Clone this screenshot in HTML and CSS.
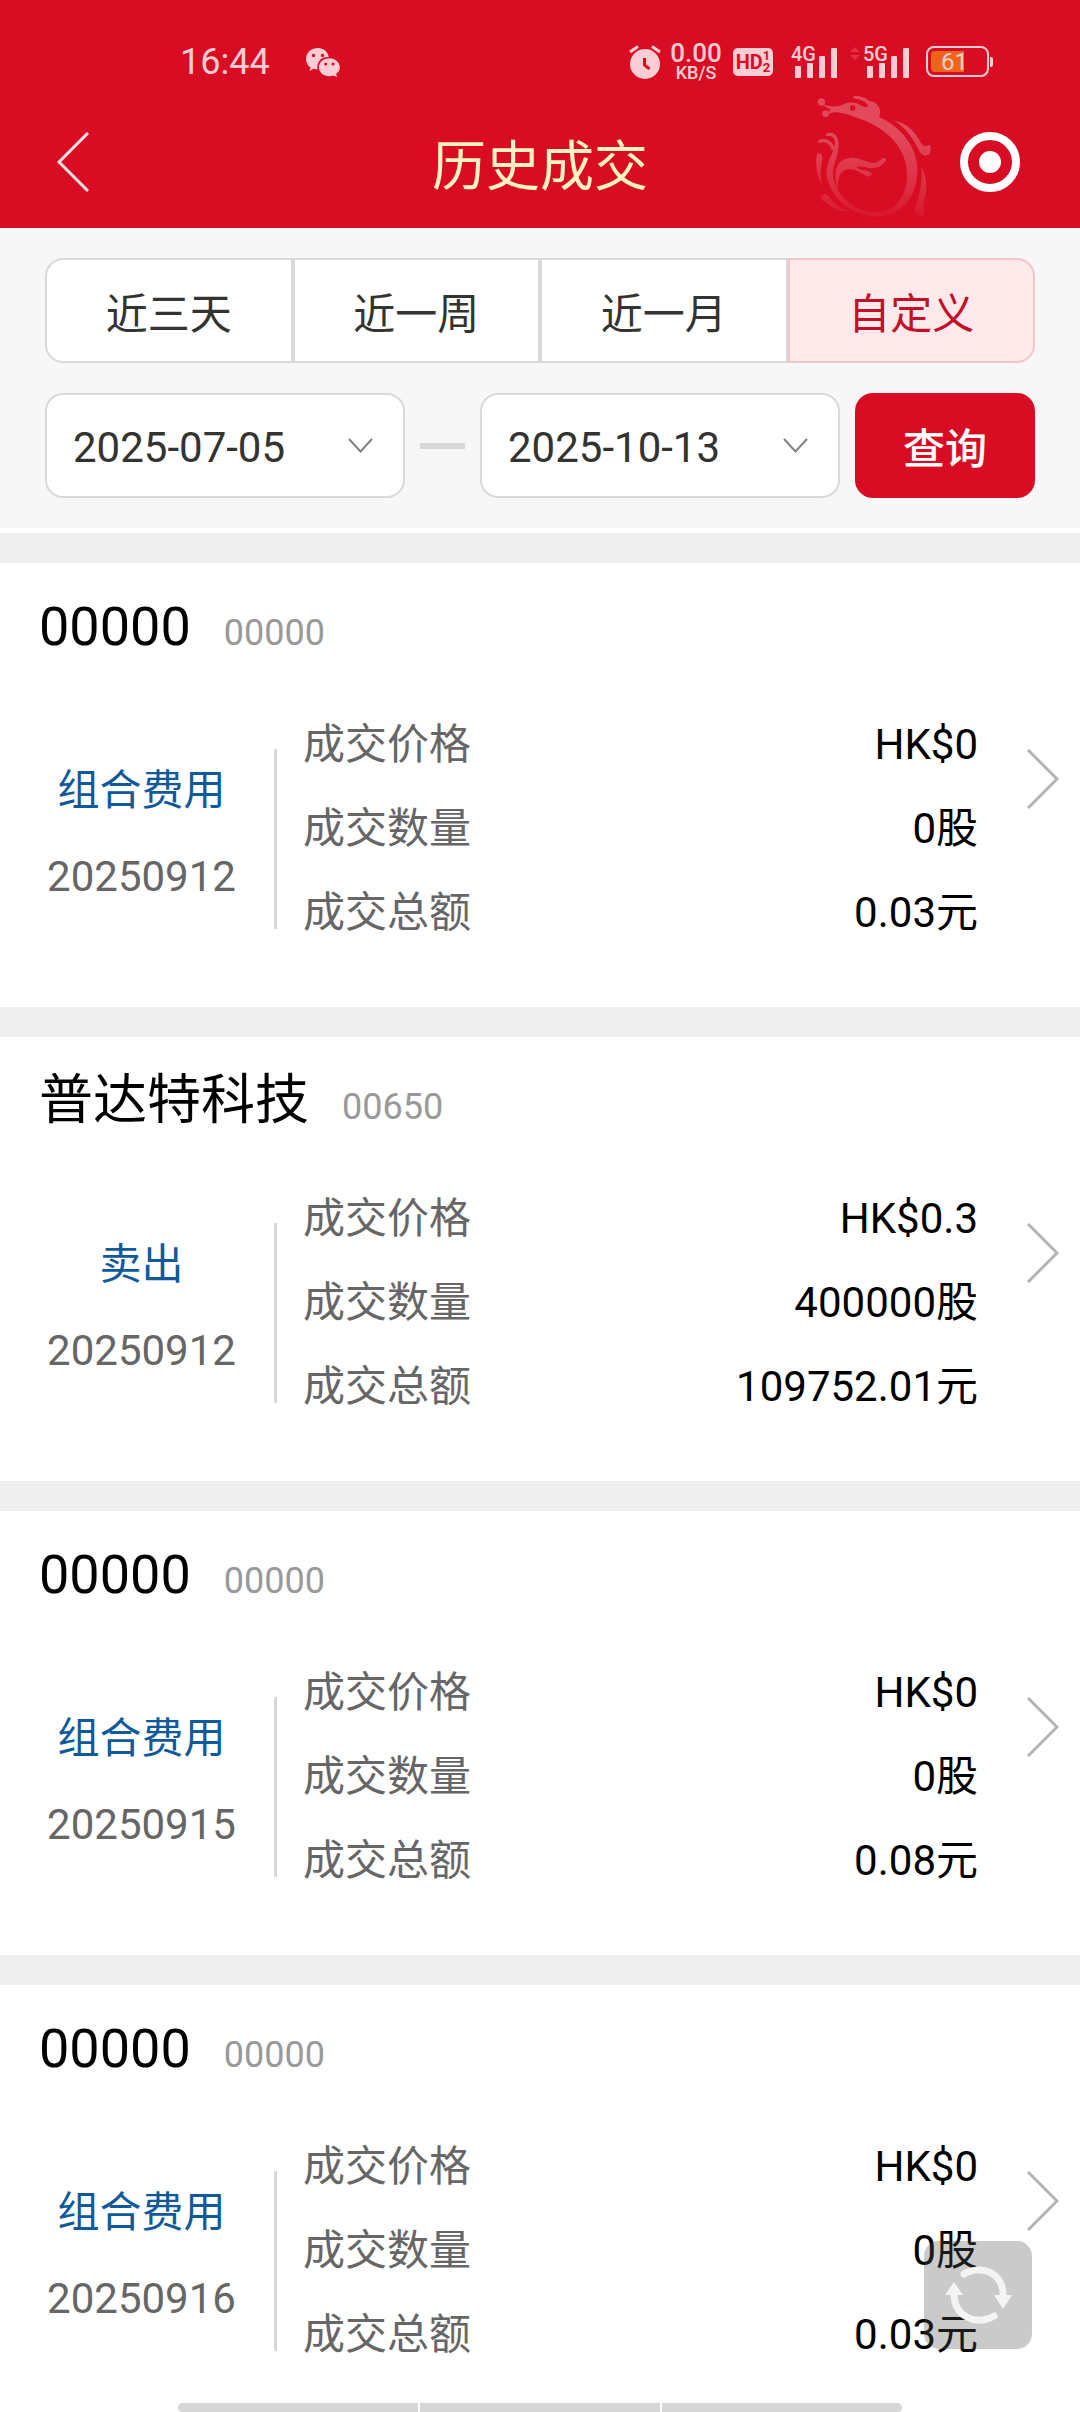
FILE: index.html
```html
<!DOCTYPE html>
<html lang="zh-CN">
<head>
<meta charset="utf-8">
<meta name="viewport" content="width=device-width, initial-scale=1">
<title>历史成交</title>
<link rel="stylesheet" href="styles.css">
</head>
<body>
<div class="screen">
  <header class="top">
    <div class="status">
      <span class="clock">16:44</span>
      <svg viewBox="0 0 34 30" width="34" height="30" fill="currentColor" aria-hidden="true">
        <path fill-rule="evenodd" d="M12 1C5.400 1 0 5.600 0 12c0 3.600 1.800 6.600 4.600 8.600L3.500 24l4.300-2.200c1.300.4 2.400.6 3.800.6A10 10 0 0 1 22.800 10C21.900 4.800 17.500 1 12 1ZM7.500 6.800a1.700 1.700 0 1 1 0 3.400 1.700 1.700 0 0 1 0-3.400Zm9 0a1.700 1.700 0 1 1 0 3.400 1.700 1.700 0 0 1 0-3.400Z"/>
        <path fill-rule="evenodd" d="M23.300 11.200c-5.800 0-10.400 4-10.400 9s4.600 9 10.400 9c1.400 0 2.600-.2 3.800-.6L31 30l-.9-3.200c2.400-1.600 3.700-4 3.700-6.600 0-5-4.700-9-10.500-9ZM19.700 15.600a1.500 1.500 0 1 1 0 3 1.500 1.500 0 0 1 0-3Zm7.300 0a1.500 1.500 0 1 1 0 3 1.500 1.500 0 0 1 0-3Z"/>
      </svg>
      <div class="status-right">
        <svg viewBox="0 0 32 34" width="32" height="34" fill="none" aria-hidden="true">
          <path d="M1 7 9 1.500M31 7 23 1.500" stroke="currentColor" stroke-width="3"/>
          <circle cx="16" cy="19" r="15" fill="currentColor"/>
          <path d="M15.500 13v7l5 4" stroke="#d80c22" stroke-width="3"/>
        </svg>
        <span class="speed"><span>0.00</span><span class="speed-unit">KB/S</span></span>
        <span class="hd"><span>HD</span><span class="hd-sims"><span>1</span><span>2</span></span></span>
        <span class="signal">
          <span class="signal-type">4G</span>
          <svg viewBox="0 0 47 32" width="47" height="32" fill="currentColor" aria-hidden="true"><rect x="4" y="20" width="6" height="12" rx="1"/><rect x="16" y="17" width="6" height="15" rx="1"/><rect x="28" y="10" width="6" height="22" rx="1"/><rect x="40" y="2" width="6" height="30" rx="1"/></svg>
        </span>
        <svg class="traffic" viewBox="0 0 10 32" width="10" height="32" fill="currentColor" aria-hidden="true"><path d="M0 6 5 1l5 5zM0 9l5 5 5-5z"/></svg>
        <span class="signal">
          <span class="signal-type">5G</span>
          <svg viewBox="0 0 47 32" width="47" height="32" fill="currentColor" aria-hidden="true"><rect x="4" y="20" width="6" height="12" rx="1"/><rect x="16" y="17" width="6" height="15" rx="1"/><rect x="28" y="10" width="6" height="22" rx="1"/><rect x="40" y="2" width="6" height="30" rx="1"/></svg>
        </span>
        <span class="battery">
          <svg viewBox="0 0 67 32" width="67" height="32" aria-hidden="true"><rect x="1" y="1" width="61" height="29" rx="7" fill="none" stroke="currentColor" stroke-width="2"/><path d="M64 11h1a2 2 0 0 1 2 2v6a2 2 0 0 1-2 2h-1z" fill="currentColor"/><path d="M9 5h29v21H9a4 4 0 0 1-4-4V9a4 4 0 0 1 4-4z" fill="#ec651b"/></svg>
          <span class="battery-level">61</span>
        </span>
      </div>
    </div>
    <div class="titlebar">
      <button class="icon-button" type="button" aria-label="返回">
        <svg viewBox="0 0 32 60" width="32" height="60" fill="none" stroke="#ffe4e6" stroke-width="3"><path d="M31 1 2 30 31 59"/></svg>
      </button>
      <h1>历史成交</h1>
      <div class="titlebar-end">
        <svg viewBox="0 18 420 396" width="140" height="132" aria-hidden="true">
          <defs>
            <linearGradient id="fade" x1="0" y1="0" x2="0" y2="1"><stop offset="0" stop-color="#fff" stop-opacity=".26"/><stop offset=".3" stop-color="#fff" stop-opacity=".25"/><stop offset=".7" stop-color="#fff" stop-opacity=".14"/><stop offset="1" stop-color="#fff" stop-opacity=".01"/></linearGradient>
            <mask id="dragon">
              <g fill="#fff">
                <circle cx="49" cy="36" r="11"/>
                <circle cx="62" cy="71" r="10"/>
                <path d="M52 44C66 54 70 54 76 59C78 61 70 64 66 72C74 72 78 68 86 67C105 64 140 76 180 92C255 123 306 180 306 255C306 320 270 366 215 366C150 366 95 320 84 260C80 225 102 200 100 165L88 165C88 190 64 210 64 250C70 310 130 380 215 380C290 380 337 320 337 240C337 160 275 105 224 82C220 78 227 76 225 64C224 46 208 32 193 34C185 24 168 18 150 18C142 18 144 26 150 26C166 27 182 34 189 45C190 54 176 52 165 45C150 36 132 36 118 42C100 52 75 52 52 42Z"/>
                <path d="M36 191c8-5 18 3 16 18C44 240 46 270 54 290C34 260 32 225 34 205Z"/>
                <path d="M98 300C84 250 92 212 130 205C160 198 185 220 205 219C222 218 228 205 235 204C244 202 244 210 240 216C230 231 210 236 190 234C170 229 155 226 156 233C170 242 195 240 200 250C202 258 192 262 184 258C165 248 150 236 130 237C105 240 98 262 98 300Z"/>
                <path d="M268 93C300 96 325 120 340 145C350 165 358 172 366 167C374 162 378 168 377 180C376 197 360 203 348 190C330 165 320 125 268 93Z"/>
                <path d="M350 232C370 270 366 310 356 340C352 352 362 362 358 372C350 385 330 378 330 360C335 330 352 310 350 232Z"/>
                <path d="M50 318c10-12 22 0 28 10C90 345 105 355 135 364C105 368 80 356 66 338C58 336 44 330 50 318Z"/>
                <path d="M150 392Q200 402 245 388Q205 410 150 392Z"/>
              </g>
              <path d="M44 154C62 148 78 156 84 176M68 134C90 128 100 150 94 180" fill="none" stroke="#fff" stroke-width="10" stroke-linecap="round"/>
              <circle cx="143" cy="54" r="8" fill="#000"/>
            </mask>
          </defs>
          <rect y="18" width="420" height="396" fill="url(#fade)" mask="url(#dragon)"/>
        </svg>
        <button class="icon-button" type="button" aria-label="关闭">
          <svg viewBox="0 0 60 60" width="60" height="60"><circle cx="30" cy="30" r="26" fill="none" stroke="#fff" stroke-width="8"/><circle cx="30" cy="30" r="11" fill="#fff"/></svg>
        </button>
      </div>
    </div>
  </header>

  <form class="filter">
    <div class="ranges">
      <button type="button">近三天</button>
      <button type="button">近一周</button>
      <button type="button">近一月</button>
      <button type="button" class="selected" aria-pressed="true">自定义</button>
    </div>
    <div class="dates">
      <div class="date">
        <select aria-label="开始日期"><option>2025-07-05</option></select>
        <svg viewBox="0 0 25 15" width="25" height="15" fill="none" stroke="#808080" stroke-width="2" aria-hidden="true"><path d="M1 1 12.500 13.500 24 1"/></svg>
      </div>
      <span class="dash"></span>
      <div class="date">
        <select aria-label="结束日期"><option>2025-10-13</option></select>
        <svg viewBox="0 0 25 15" width="25" height="15" fill="none" stroke="#808080" stroke-width="2" aria-hidden="true"><path d="M1 1 12.500 13.500 24 1"/></svg>
      </div>
      <button class="query" type="submit">查询</button>
    </div>
  </form>

  <main>
    <a class="record" href="#">
      <h2>00000 <small>00000</small></h2>
      <div class="record-body">
        <div class="kind"><span class="action">组合费用</span><time datetime="2025-09-12">20250912</time></div>
        <dl>
          <div><dt>成交价格</dt><dd>HK$0</dd></div>
          <div><dt>成交数量</dt><dd>0股</dd></div>
          <div><dt>成交总额</dt><dd>0.03元</dd></div>
        </dl>
        <svg class="more" viewBox="0 0 32 60" width="32" height="60" aria-hidden="true"><path d="M1 1 30 30 1 59"/></svg>
      </div>
    </a>
    <a class="record" href="#">
      <h2>普达特科技 <small>00650</small></h2>
      <div class="record-body">
        <div class="kind"><span class="action">卖出</span><time datetime="2025-09-12">20250912</time></div>
        <dl>
          <div><dt>成交价格</dt><dd>HK$0.3</dd></div>
          <div><dt>成交数量</dt><dd>400000股</dd></div>
          <div><dt>成交总额</dt><dd>109752.01元</dd></div>
        </dl>
        <svg class="more" viewBox="0 0 32 60" width="32" height="60" aria-hidden="true"><path d="M1 1 30 30 1 59"/></svg>
      </div>
    </a>
    <a class="record" href="#">
      <h2>00000 <small>00000</small></h2>
      <div class="record-body">
        <div class="kind"><span class="action">组合费用</span><time datetime="2025-09-15">20250915</time></div>
        <dl>
          <div><dt>成交价格</dt><dd>HK$0</dd></div>
          <div><dt>成交数量</dt><dd>0股</dd></div>
          <div><dt>成交总额</dt><dd>0.08元</dd></div>
        </dl>
        <svg class="more" viewBox="0 0 32 60" width="32" height="60" aria-hidden="true"><path d="M1 1 30 30 1 59"/></svg>
      </div>
    </a>
    <a class="record" href="#">
      <h2>00000 <small>00000</small></h2>
      <div class="record-body">
        <div class="kind"><span class="action">组合费用</span><time datetime="2025-09-16">20250916</time></div>
        <dl>
          <div><dt>成交价格</dt><dd>HK$0</dd></div>
          <div><dt>成交数量</dt><dd>0股</dd></div>
          <div><dt>成交总额</dt><dd>0.03元</dd></div>
        </dl>
        <svg class="more" viewBox="0 0 32 60" width="32" height="60" aria-hidden="true"><path d="M1 1 30 30 1 59"/></svg>
      </div>
    </a>
  </main>
</div>

<button class="refresh" type="button" aria-label="刷新">
  <svg viewBox="0 0 108 108" width="108" height="108" fill="none" stroke="#f4f4f4" stroke-width="7" stroke-linecap="round" aria-hidden="true">
    <path d="M40 33C58 23 80 32 79 56"/>
    <path d="M70 75C52 85 30 76 30 52"/>
    <path d="M70 54h18l-9 14zM21 54h18l-9-13z" fill="#f4f4f4" stroke="none"/>
  </svg>
</button>
<div class="nav-hint" aria-hidden="true"><span></span><span></span><span></span></div>
</body>
</html>
```
FILE: styles.css
```css
* {
  box-sizing: border-box;
}

body {
  margin: 0;
  background: #fff;
  color: #000;
  font-family: Roboto, "Noto Sans CJK SC", sans-serif;
  font-size: 42px;
}

svg {
  display: block;
  flex: none;
}

button,
select {
  margin: 0;
  padding: 0;
  border: 0;
  background: none;
  color: inherit;
  font: inherit;
}

.screen {
  height: 100vh;
  overflow: hidden;
}

/* Header */

.top {
  background: #d80c22;
  color: #fccdd5;
}

.status {
  display: flex;
  align-items: center;
  height: 96px;
  padding: 28px 87px 0 180px;
}

.clock {
  margin-right: 36px;
  font-size: 36px;
}

.status-right {
  display: flex;
  align-items: center;
  margin-left: auto;
  font-weight: 500;
}

.speed {
  display: flex;
  flex-direction: column;
  align-items: center;
  width: 52px;
  margin: 0 11px 0 9px;
  font-size: 26px;
  line-height: 22px;
}

.speed-unit {
  font-size: 18px;
  line-height: 18px;
}

.hd {
  display: flex;
  align-items: center;
  justify-content: center;
  width: 40px;
  height: 28px;
  margin-right: 18px;
  border-radius: 5px;
  background: #fccdd5;
  color: #d80c22;
  font-size: 20px;
  font-weight: 700;
}

.hd-sims {
  display: flex;
  flex-direction: column;
  font-size: 13px;
  line-height: 12px;
}

.signal,
.battery {
  position: relative;
}

.signal-type {
  position: absolute;
  top: -2px;
  left: 0;
  font-size: 20px;
  line-height: 20px;
}

.traffic {
  margin: 0 3px 0 12px;
  opacity: .2;
}

.battery {
  margin-left: 16px;
}

.battery-level {
  position: absolute;
  inset: 0 25px 0 0;
  font-size: 24px;
  font-weight: 400;
  line-height: 32px;
  text-align: right;
}

.titlebar {
  display: grid;
  grid-template-columns: 1fr auto 1fr;
  align-items: center;
  padding: 0 60px;
}

.titlebar h1 {
  margin: 0;
  color: #fff2c4;
  font-size: 54px;
  font-weight: 400;
}

.titlebar-end {
  display: flex;
  align-items: center;
  justify-content: flex-end;
  gap: 15px;
}

.icon-button {
  justify-self: start;
}

.titlebar > .icon-button {
  margin-left: -3px;
}

/* Filter */

.filter {
  display: grid;
  gap: 30px;
  padding: 30px 45px;
  border-bottom: 5px solid #fff;
  background: #f7f7f7;
  color: #333330;
}

.ranges {
  display: grid;
  grid-template-columns: repeat(4, 1fr);
}

.ranges button {
  height: 105px;
  border: 2px solid #d9d9d9;
  background: #fff;
}

.ranges button:first-child {
  border-radius: 18px 0 0 18px;
}

.ranges button:last-child {
  border-radius: 0 18px 18px 0;
}

.ranges .selected {
  border-color: #f3c6ca;
  background: #ffe9ea;
  color: #c40f28;
}

.dates {
  display: flex;
  align-items: center;
  gap: 15px;
}

.date {
  display: flex;
  flex: 1;
  align-items: center;
  height: 105px;
  padding: 0 30px 0 26px;
  border: 2px solid #d9d9d9;
  border-radius: 18px;
  background: #fff;
}

.date select {
  flex: 1;
  min-width: 0;
  padding-top: 4px;
  appearance: none;
}

.dash {
  width: 45px;
  height: 6px;
  background: #d9d9d9;
}

.query {
  width: 180px;
  height: 105px;
  border-radius: 18px;
  background: #d80c22;
  color: #fff;
  font-weight: 500;
}

/* Records */

.record {
  display: block;
  padding: 32px 21px 52px 39px;
  border-top: 30px solid #efefef;
  color: inherit;
  text-decoration: none;
}

.record h2 {
  display: flex;
  align-items: baseline;
  gap: 33px;
  margin: 0 0 44px;
  font-size: 54px;
  font-weight: 400;
  line-height: 64px;
}

.record small {
  color: #999;
  font-size: 36px;
  line-height: 40px;
}

.record-body {
  display: flex;
}

.kind {
  display: flex;
  flex-direction: column;
  align-items: center;
  width: 205px;
  margin: 45px 30px 0 0;
  color: #666;
  line-height: 86px;
}

.action {
  color: #105a9c;
}

.record dl {
  position: relative;
  flex: 1;
  margin: 0;
  padding-left: 29px;
  line-height: 84px;
}

.record dl::before {
  position: absolute;
  top: 46px;
  left: 0;
  width: 3px;
  height: 180px;
  background: #d6d6d6;
  content: "";
}

.record dl div {
  display: flex;
  justify-content: space-between;
}

.record dt {
  color: #666;
}

.record dd {
  margin: 0;
}

.more {
  margin: 46px 0 0 49px;
  fill: none;
  stroke: #b3b3b3;
  stroke-width: 3;
}

/* Floating controls */

.refresh {
  position: fixed;
  right: 48px;
  bottom: 63px;
  border-radius: 15px;
  background: rgba(83, 83, 83, .31);
}

.nav-hint {
  position: fixed;
  right: 0;
  bottom: 0;
  left: 0;
  display: flex;
  gap: 2px;
  width: 67%;
  height: 9px;
  margin: 0 auto;
}

.nav-hint span {
  flex: 1;
  background: #d6d6d6;
}

.nav-hint span:first-child {
  border-radius: 5px 0 0 5px;
}

.nav-hint span:last-child {
  border-radius: 0 5px 5px 0;
}
```
